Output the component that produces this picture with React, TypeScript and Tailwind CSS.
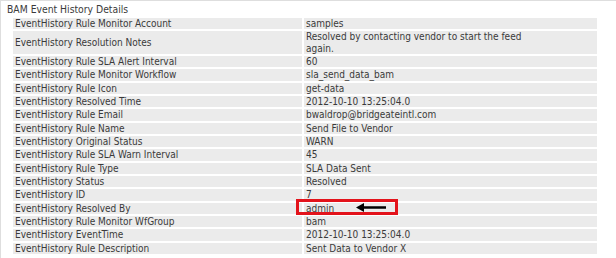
import React from "react";

const rows: [string, React.ReactNode][] = [
  ["EventHistory Rule Monitor Account", "samples"],
  [
    "EventHistory Resolution Notes",
    <>
      Resolved by contacting vendor to start the feed
      <br />
      again.
    </>,
  ],
  ["EventHistory Rule SLA Alert Interval", "60"],
  ["EventHistory Rule Monitor Workflow", "sla_send_data_bam"],
  ["EventHistory Rule Icon", "get-data"],
  ["EventHistory Resolved Time", "2012-10-10 13:25:04.0"],
  ["EventHistory Rule Email", "bwaldrop@bridgeateintl.com"],
  ["EventHistory Rule Name", "Send File to Vendor"],
  ["EventHistory Original Status", "WARN"],
  ["EventHistory Rule SLA Warn Interval", "45"],
  ["EventHistory Rule Type", "SLA Data Sent"],
  ["EventHistory Status", "Resolved"],
  ["EventHistory ID", "7"],
  ["EventHistory Resolved By", "admin"],
  ["EventHistory Rule Monitor WfGroup", "bam"],
  ["EventHistory EventTime", "2012-10-10 13:25:04.0"],
  ["EventHistory Rule Description", "Sent Data to Vendor X"],
];

export default function App() {
  return (
    <div
      className="relative w-[616px] h-[258px] bg-white border-t border-l border-[#dedede] text-[#3a3a3a] overflow-hidden"
      style={{ fontFamily: '"DejaVu Sans Condensed", "DejaVu Sans", sans-serif' }}
    >
      <div className="h-[17px] pl-[6px] text-[10.3px] leading-[17px]">BAM Event History Details</div>
      <div className="ml-[12px] grid grid-cols-[289px_293px] gap-[2px] text-[10px] leading-[11.33px]">
        {rows.map(([k, v], i) => (
          <React.Fragment key={i}>
            <div className="bg-[#ebebeb] pl-[2px] flex items-center">{k}</div>
            <div className="bg-[#ebebeb] pl-[2px]">{v}</div>
          </React.Fragment>
        ))}
      </div>
      <div className="absolute left-[295px] top-[198px] w-[102px] h-[16px] border-[3px] border-[#e3131b]">
        <svg className="absolute left-[57px] top-[1px]" width="32" height="9" viewBox="0 0 32 9">
          <path d="M0 4.5 L8 0 L8 3.3 L30 3.3 L30 5.7 L8 5.7 L8 9 Z" fill="#000" />
        </svg>
      </div>
    </div>
  );
}
